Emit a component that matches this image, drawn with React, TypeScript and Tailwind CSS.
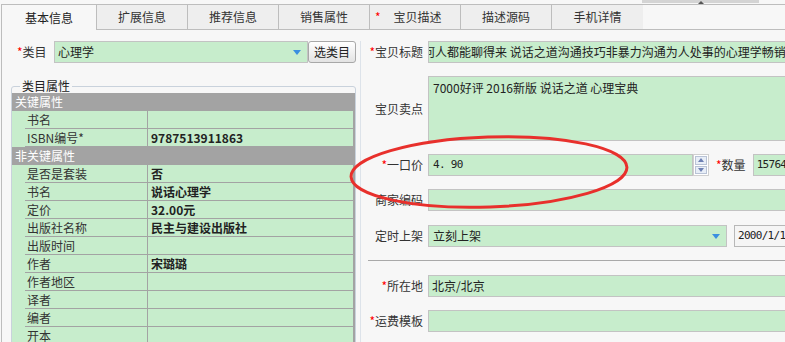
import * as React from "react";

type Row = { head?: string; label?: string; value?: string };

const attrs: Row[] = [
  { head: "关键属性" },
  { label: "书名", value: "" },
  { label: "ISBN编号*", value: "9787513911863" },
  { head: "非关键属性" },
  { label: "是否是套装", value: "否" },
  { label: "书名", value: "说话心理学" },
  { label: "定价", value: "32.00元" },
  { label: "出版社名称", value: "民主与建设出版社" },
  { label: "出版时间", value: "" },
  { label: "作者", value: "宋璐璐" },
  { label: "作者地区", value: "" },
  { label: "译者", value: "" },
  { label: "编者", value: "" },
  { label: "开本", value: "" },
  { label: "", value: "" },
];

const tabs = ["基本信息", "扩展信息", "推荐信息", "销售属性", "宝贝描述", "描述源码", "手机详情"];

function Star() {
  return <span className="text-[#ff0000]">*</span>;
}

function Arrow() {
  return (
    <svg width="8" height="5" viewBox="0 0 8 5" className="shrink-0">
      <path d="M0 0h8L4 5z" fill="#3b8fe0" />
    </svg>
  );
}

function Label({ children, star }: { children: React.ReactNode; star?: boolean }) {
  return (
    <div className="w-[62px] shrink-0 text-right text-[12px] text-[#333] whitespace-nowrap">
      {star && <Star />}
      {children}
    </div>
  );
}

const green = "h-[22px] bg-[#c7edcc] border border-[#c3c3c3] flex items-center";
const mono = "font-['DejaVu_Sans_Mono',monospace] text-[11px] tracking-[-0.7px]";

export default function App() {
  return (
    <div className="relative w-[785px] h-[342px] overflow-hidden bg-[#f7f7f7] font-['Noto_Sans_CJK_SC',sans-serif] text-[12px] text-[#333]">
      {/* top scroll handle */}
      <div className="absolute top-0 left-[642px] w-[117px] h-[3px] bg-[#d4d4d4]">
        <div className="absolute left-[56px] top-[1px] w-0 h-0 border-x-[3px] border-x-transparent border-b-[3px] border-b-[#555]" />
      </div>

      <div className="h-[4px]" />
      <div className="ml-[1px] border-l border-t border-[#bdbdbd]">
        {/* tabs */}
        <div className="flex h-[25px]">
          {tabs.map((t, i) => (
            <div
              key={t}
              className={
                i === 0
                  ? "w-[95px] shrink-0 border-r border-[#bdbdbd] flex items-center justify-center"
                  : i === tabs.length - 1
                  ? "w-[91px] shrink-0 bg-[#eeeeee] border-b border-[#bdbdbd] flex items-center justify-center"
                  : "w-[91px] shrink-0 bg-[#eeeeee] border-r border-b border-[#bdbdbd] flex items-center justify-center"
              }
            >
              {i === 4 ? (
                <div className="w-full flex items-center pl-[5px]">
                  <Star />
                  <span className="ml-[13px]">{t}</span>
                </div>
              ) : (
                <span className={i === 0 ? "text-[#222]" : ""}>{t}</span>
              )}
            </div>
          ))}
          <div className="flex-1 border-b border-[#bdbdbd]" />
        </div>

        <div className="flex pt-[11px]">
          {/* left column */}
          <div className="w-[358px] shrink-0">
            <div className="flex items-center h-[22px] pl-[15px]">
              <div className="w-[31px] whitespace-nowrap">
                <Star />
                类目
              </div>
              <div className={green + " w-[254px] ml-[6px] pl-[3px] pr-[6px] justify-between"}>
                <span className="text-[#222]">心理学</span>
                <Arrow />
              </div>
              <button className="w-[48px] h-[22px] border border-[#a8a8a8] rounded-[3px] bg-gradient-to-b from-[#ffffff] to-[#e3e3e3] text-[12px] text-[#222]">
                选类目
              </button>
            </div>

            <fieldset className="ml-[9px] mt-[16px] w-[345px] border border-[#c9d2dc] rounded-[3px]">
              <legend className="ml-[8px] px-[2px] text-[12px] leading-[14px] text-[#222]">类目属性</legend>
              <div className="border-r-2 border-[#a3a3a3]">
                {attrs.map((r, i) =>
                  r.head ? (
                    <div key={i} className="h-[18px] bg-[#a3a3a3] text-white pl-[3px] leading-[17px]">
                      {r.head}
                    </div>
                  ) : (
                    <div key={i} className="flex h-[18px] bg-[#c7edcc]">
                      <div className="w-[13px] shrink-0" />
                      <div className="flex flex-1 border-b border-[#a3a3a3]">
                        <div className="w-[123px] shrink-0 border-r border-[#a3a3a3] pl-[2px] leading-[17px]">
                          {r.label}
                        </div>
                        <div className="flex-1 pl-[3px] leading-[17px] font-bold text-[#222]">{r.value}</div>
                      </div>
                    </div>
                  )
                )}
              </div>
            </fieldset>
          </div>

          {/* right column */}
          <div className="w-[460px] shrink-0 border-l border-[#dde3ea]">
            <div className="flex items-center gap-[5px]">
              <Label star>宝贝标题</Label>
              <div className={green + " flex-1 overflow-hidden whitespace-nowrap"}>
                <span className="-ml-[6px] text-[#222]">何人都能聊得来 说话之道沟通技巧非暴力沟通为人处事的心理学畅销书</span>
              </div>
            </div>

            <div className="flex items-center gap-[5px] mt-[13px]">
              <Label>宝贝卖点</Label>
              <div className="flex-1 h-[65px] bg-[#c7edcc] border border-[#c3c3c3] pl-[4px] pt-[2px] text-[#222] whitespace-nowrap">
                7000好评 2016新版 说话之道 心理宝典
              </div>
            </div>

            <div className="flex items-center gap-[5px] mt-[13px]">
              <Label star>一口价</Label>
              <div className={green + " w-[265px] pl-[4px] text-[#222] " + mono}>4. 90</div>
              <div className="-ml-[5px] w-[16px] h-[22px] bg-white border border-[#d0d0d0] flex flex-col justify-center gap-[1px] p-[1px]">
                <div className="h-[9px] border border-[#b9c3d6] bg-[#e8eef7] flex items-center justify-center">
                  <div className="w-0 h-0 border-x-[3px] border-x-transparent border-b-[4px] border-b-[#6d80b3]" />
                </div>
                <div className="h-[9px] border border-[#b9c3d6] bg-[#e8eef7] flex items-center justify-center">
                  <div className="w-0 h-0 border-x-[3px] border-x-transparent border-t-[4px] border-t-[#6d80b3]" />
                </div>
              </div>
              <div className="ml-[2px] whitespace-nowrap">
                <Star />
                数量
              </div>
              <div className={green + " ml-[2px] flex-1 pl-[3px] text-[#222] " + mono}>15764</div>
            </div>

            <div className="flex items-center gap-[5px] mt-[13px]">
              <Label>商家编码</Label>
              <div className={green + " flex-1"} />
            </div>

            <div className="flex items-center gap-[5px] mt-[14px]">
              <Label>定时上架</Label>
              <div className={green + " w-[299px] pl-[4px] pr-[6px] justify-between text-[#222]"}>
                <span>立刻上架</span>
                <Arrow />
              </div>
              <div className={"ml-[2px] flex-1 h-[22px] bg-[#f5f5f5] border border-[#b8b8b8] pl-[3px] flex items-center text-[#222] " + mono}>
                2000/1/1
              </div>
            </div>

            <div className="mt-[13px] ml-[7px] h-[1px] bg-[#a9a9a9]" />

            <div className="flex items-center gap-[5px] mt-[14px]">
              <Label star>所在地</Label>
              <div className={green + " flex-1 pl-[3px] text-[#222]"}>北京/北京</div>
            </div>

            <div className="flex items-center gap-[5px] mt-[13px]">
              <Label star>运费模板</Label>
              <div className={green + " flex-1"} />
            </div>
          </div>
        </div>
      </div>

      {/* red highlight ellipse */}
      <svg className="absolute left-0 top-0 pointer-events-none" width="785" height="342">
        <ellipse cx="489" cy="172" rx="138" ry="35" fill="none" stroke="#e8302c" strokeWidth="3" transform="rotate(-2 489 172)" />
      </svg>
    </div>
  );
}
